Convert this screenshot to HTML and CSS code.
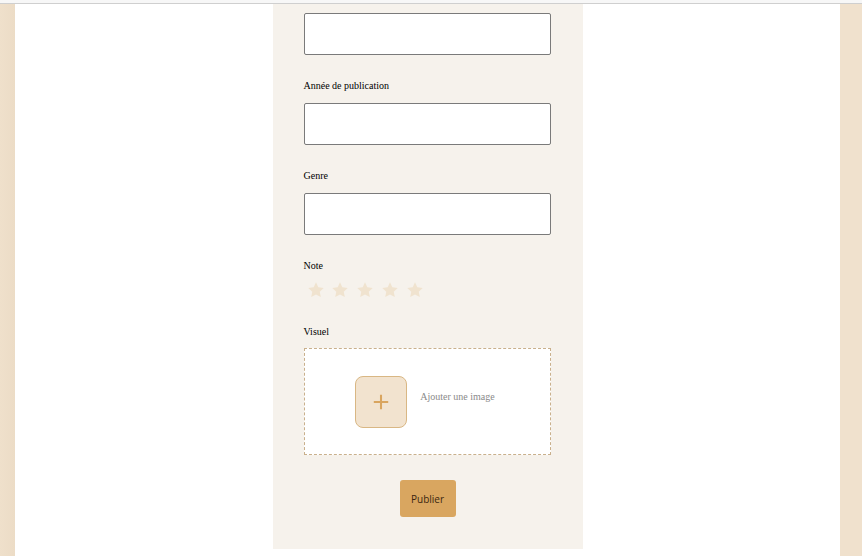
FILE: index.html
```html
<!DOCTYPE html>
<html lang="fr">
<head>
<meta charset="utf-8">
<title>Publier un livre</title>
<link rel="stylesheet" href="styles.css">
</head>
<body>
<div class="topbar"></div>
<div class="frame">
  <aside class="side side-left"></aside>
  <main class="page">
    <form class="panel">
      <div class="field first">
        <input class="text-input" type="text">
      </div>
      <div class="field">
        <label class="label">Année de publication</label>
        <input class="text-input" type="text">
      </div>
      <div class="field">
        <label class="label">Genre</label>
        <input class="text-input" type="text">
      </div>
      <div class="field">
        <label class="label">Note</label>
        <div class="stars">
          <svg class="star" viewBox="0 0 24 24"><path d="M12 1.8l3.1 6.6 7.2.9-5.3 5 1.4 7.1L12 17.9l-6.4 3.5 1.4-7.1-5.3-5 7.2-.9z"/></svg>
          <svg class="star" viewBox="0 0 24 24"><path d="M12 1.8l3.1 6.6 7.2.9-5.3 5 1.4 7.1L12 17.9l-6.4 3.5 1.4-7.1-5.3-5 7.2-.9z"/></svg>
          <svg class="star" viewBox="0 0 24 24"><path d="M12 1.8l3.1 6.6 7.2.9-5.3 5 1.4 7.1L12 17.9l-6.4 3.5 1.4-7.1-5.3-5 7.2-.9z"/></svg>
          <svg class="star" viewBox="0 0 24 24"><path d="M12 1.8l3.1 6.6 7.2.9-5.3 5 1.4 7.1L12 17.9l-6.4 3.5 1.4-7.1-5.3-5 7.2-.9z"/></svg>
          <svg class="star" viewBox="0 0 24 24"><path d="M12 1.8l3.1 6.6 7.2.9-5.3 5 1.4 7.1L12 17.9l-6.4 3.5 1.4-7.1-5.3-5 7.2-.9z"/></svg>
        </div>
      </div>
      <div class="field">
        <label class="label">Visuel</label>
        <div class="dropzone">
          <div class="plus-box">
            <svg viewBox="0 0 20 20" class="plus"><path d="M10 2v16M2 10h16"/></svg>
          </div>
          <span class="drop-text">Ajouter une image</span>
        </div>
      </div>
      <div class="actions">
        <button type="button" class="btn">Publier</button>
      </div>
    </form>
  </main>
  <aside class="side side-right"></aside>
</div>
</body>
</html>
```
FILE: styles.css
```css
* { box-sizing: border-box; }
html, body { margin: 0; padding: 0; }
body {
  background: #ffffff;
  font-family: "Liberation Serif", "Times New Roman", serif;
  color: #000;
  height: 556px;
  overflow: hidden;
}
.topbar {
  height: 4px;
  background: #f7f7f7;
  border-bottom: 1px solid #cfcfcf;
}
.frame {
  display: flex;
  height: 552px;
}
.side-left {
  width: 15px;
  background: linear-gradient(to right, #efe0cb, #ecdcc6);
}
.side-right {
  width: 22px;
  background: #f0e1cd;
}
.page {
  flex: 1;
  display: flex;
  justify-content: center;
  align-items: flex-start;
  background: #fff;
}
.panel {
  width: 310px;
  background: #f6f2ec;
  padding: 9px 32px 32px 31px;
  display: flex;
  flex-direction: column;
}
.field { margin-top: 24px; display: flex; flex-direction: column; }
.field.first { margin-top: 0; }
.label {
  font-size: 10px;
  line-height: 12px;
  margin-bottom: 12px;
  position: relative;
  top: 1px;
}
.text-input {
  width: 247px;
  height: 42px;
  border: 1px solid #7a7a7a;
  border-radius: 2px;
  background: #fff;
  font: inherit;
}
.stars {
  display: flex;
  gap: 6.8px;
  margin-top: -2px;
  padding-left: 3px;
  height: 20px;
}
.star { width: 18px; height: 18px; fill: #f0e3cf; }
.dropzone {
  width: 247px;
  height: 107px;
  margin-top: -1px;
  border: 1px dashed #c9b08c;
  background: #fff;
  display: flex;
  align-items: center;
  justify-content: center;
  gap: 13px;
  padding-right: 4px;
}
.plus-box {
  width: 52px;
  height: 52px;
  border-radius: 8px;
  background: #f2e3cf;
  border: 1px solid #d9b784;
  display: flex;
  align-items: center;
  justify-content: center;
}
.plus { width: 18px; height: 18px; stroke: #d9a55f; stroke-width: 2.3; fill: none; }
.drop-text {
  font-size: 10px;
  color: #8a8a8a;
  padding-bottom: 10px;
}
.actions {
  display: flex;
  justify-content: center;
  margin-top: 25px;
  padding-left: 1px;
}
.btn {
  width: 56px;
  height: 37px;
  border: none;
  border-radius: 3px;
  background: #d9a660;
  color: #3b2610;
  font-family: "Open Sans", "Liberation Sans", sans-serif;
  font-size: 10px;
  padding: 0;
}
```
